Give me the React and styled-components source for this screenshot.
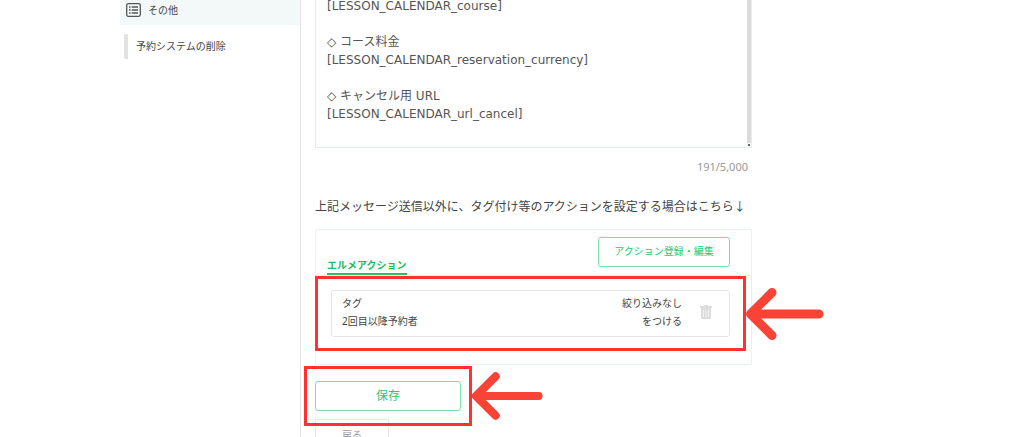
import React, { useState } from 'react';
import styled, { createGlobalStyle } from 'styled-components';

const initialMessage = `[LESSON_CALENDAR_course]

◇ コース料金
[LESSON_CALENDAR_reservation_currency]

◇ キャンセル用 URL
[LESSON_CALENDAR_url_cancel]`;

const App = () => {
  const [message, setMessage] = useState(initialMessage);

  return (
    <>
      <GlobalStyle />
      <Page>
        <Sidebar>
          <SidebarHeading href="#other">
            <ListIcon />
            その他
          </SidebarHeading>
          <SidebarLink href="#delete">予約システムの削除</SidebarLink>
        </Sidebar>
        <Main>
          <MessageBox>
            <MessageInput
              aria-label="メッセージ"
              value={message}
              onChange={(e) => setMessage(e.target.value)}
            />
            <ScrollTrack>
              <ScrollThumb />
              <ScrollArrow />
            </ScrollTrack>
          </MessageBox>
          <Counter>191/5,000</Counter>
          <Note>上記メッセージ送信以外に、タグ付け等のアクションを設定する場合はこちら↓</Note>
          <Card>
            <CardHeader>
              <CardTitle>エルメアクション</CardTitle>
              <EditButton type="button">アクション登録・編集</EditButton>
            </CardHeader>
            <ActionItem>
              <ActionText>
                <span>タグ</span>
                <span>2回目以降予約者</span>
              </ActionText>
              <ActionText $end>
                <span>絞り込みなし</span>
                <span>をつける</span>
              </ActionText>
              <DeleteButton type="button" aria-label="削除">
                <TrashIcon />
              </DeleteButton>
              <Highlight $x={17} $y={15}>
                <Arrow $width={80} />
              </Highlight>
            </ActionItem>
          </Card>
          <SaveArea>
            <SaveButton type="button">保存</SaveButton>
            <Highlight $x={11} $y={15}>
              <Arrow $width={73} />
            </Highlight>
          </SaveArea>
          <BackButton type="button">戻る</BackButton>
        </Main>
      </Page>
    </>
  );
};

const ListIcon = () => (
  <svg width="15" height="14" viewBox="0 0 15 14" fill="none" stroke="#555" aria-hidden="true">
    <rect x="0.7" y="0.7" width="13.6" height="12.6" rx="1.5" strokeWidth="1.3" />
    <path d="M3 4h1.6M3 7h1.6M3 10h1.6M5.7 4H12M5.7 7H12M5.7 10H12" strokeWidth="1.4" />
  </svg>
);

const TrashIcon = () => (
  <svg width="12" height="14" viewBox="0 0 12 14" aria-hidden="true">
    <path d="M0 1h3.5L4.5 0h3l1 1H12v2H0z" fill="#ddd" />
    <path d="M1 3h10v9.5a1.5 1.5 0 0 1-1.5 1.5h-7A1.5 1.5 0 0 1 1 12.5z" fill="#ddd" />
    <path d="M3.5 5v7M6 5v7M8.5 5v7" stroke="#f6f6f6" strokeWidth="0.8" />
  </svg>
);

const Arrow = (props) => (
  <ArrowSvg viewBox="0 0 80 54" aria-hidden="true" {...props}>
    <path d="M6 27H74M27 5.5L5.5 27L27 48.5" />
  </ArrowSvg>
);

const GlobalStyle = createGlobalStyle`
  * {
    box-sizing: border-box;
  }

  body {
    margin: 0;
    background: #fff;
    color: #444;
    font-family: "Noto Sans", "Noto Sans CJK JP", sans-serif;
    font-size: 10px;
    line-height: 18px;
  }

  button,
  textarea {
    font-family: inherit;
  }
`;

const Page = styled.div`
  display: flex;
  max-width: 784px;
  height: 100vh;
  margin: 0 auto;
`;

const Sidebar = styled.nav`
  flex: 0 0 181px;
  border-right: 1px solid #e4e4e4;
`;

const SidebarHeading = styled.a`
  display: flex;
  align-items: center;
  gap: 7px;
  padding: 1px 6px 6px;
  background: #f3f9f9;
  color: inherit;
  text-decoration: none;
`;

const SidebarLink = styled.a`
  display: block;
  margin: 9px 4px 0;
  padding: 3px 0 4px 8px;
  border-left: 4px solid #e2e2e2;
  border-radius: 2px;
  color: inherit;
  text-decoration: none;
`;

const Main = styled.main`
  flex: 1;
  min-width: 0;
  padding: 0 152px 0 14px;
  overflow: clip;
  overflow-clip-margin: 152px;
`;

const MessageBox = styled.div`
  display: flex;
  margin-top: -3px;
  border: 1px solid #e4eeee;
  border-top: 0;
`;

const MessageInput = styled.textarea`
  display: block;
  flex: 1;
  min-width: 0;
  height: 150px;
  padding: 0 11px;
  border: 0;
  outline: 0;
  background: transparent;
  color: #555;
  font-family: "DejaVu Sans", "Noto Sans CJK JP", sans-serif;
  font-size: 12px;
  line-height: 18px;
  resize: none;
  overflow: hidden;
`;

const ScrollTrack = styled.div`
  display: flex;
  flex-direction: column;
  align-items: center;
  width: 4px;
  background: #f8f8f8;
`;

const ScrollThumb = styled.div`
  flex: 1;
  width: 100%;
  background: #dcdcdc;
`;

const ScrollArrow = styled.div`
  width: 2px;
  height: 2px;
  margin: 1px 0;
  background: #666;
`;

const Counter = styled.div`
  margin-top: 10px;
  padding-right: 4px;
  color: #999;
  font-size: 11px;
  text-align: right;
`;

const Note = styled.p`
  margin: 22px 0 13px;
  font-size: 12px;
  white-space: nowrap;
`;

const Card = styled.section`
  padding-bottom: 27px;
  border: 1px solid #e9f0f0;
  border-radius: 2px;
`;

const CardHeader = styled.header`
  display: flex;
  align-items: flex-end;
  justify-content: space-between;
  padding: 7px 21px 0 11px;
  border-bottom: 1px solid #e9f0f0;
`;

const CardTitle = styled.h2`
  margin: 0;
  border-bottom: 2px solid #22c468;
  color: #16bf60;
  font-size: 10px;
  font-weight: 700;
  line-height: 16px;
`;

const OutlineButton = styled.button`
  height: 30px;
  padding: 0 0 3px;
  border: 1px solid #7fdfa9;
  border-radius: 3px;
  background: #fff;
  color: #2ac870;
  cursor: pointer;
`;

const EditButton = styled(OutlineButton)`
  width: 132px;
  margin-bottom: 8px;
  font-size: 10px;
`;

const ActionItem = styled.div`
  position: relative;
  display: flex;
  align-items: center;
  margin: 14px 21px 0 15px;
  padding: 3px 17px 6px 10px;
  border: 1px solid #e6e6e6;
  border-radius: 3px;
`;

const ActionText = styled.div`
  display: flex;
  flex: 1;
  flex-direction: column;
  text-align: ${(props) => (props.$end ? 'right' : 'left')};
`;

const DeleteButton = styled.button`
  display: flex;
  margin-left: 18px;
  padding: 0;
  border: 0;
  background: none;
  cursor: pointer;
`;

const Highlight = styled.div`
  position: absolute;
  inset: ${(props) => `-${props.$y}px -${props.$x}px`};
  border: 3px solid #ff3131;
  pointer-events: none;
`;

const ArrowSvg = styled.svg`
  position: absolute;
  top: 50%;
  left: 100%;
  width: ${(props) => props.$width}px;
  margin-left: 2px;
  transform: translateY(-50%);
  fill: none;
  stroke: #f94336;
  stroke-width: 9;
  stroke-linecap: round;
  stroke-linejoin: round;
`;

const SaveArea = styled.div`
  position: relative;
  width: 146px;
  margin-top: 16px;
`;

const SaveButton = styled(OutlineButton)`
  display: block;
  width: 100%;
  font-size: 12px;
`;

const BackButton = styled.button`
  display: block;
  width: 74px;
  height: 30px;
  margin-top: 8px;
  padding: 0;
  border: 1px solid #e6e6e6;
  background: #fff;
  color: #999;
  font-size: 10px;
  cursor: pointer;
`;

export default App;
